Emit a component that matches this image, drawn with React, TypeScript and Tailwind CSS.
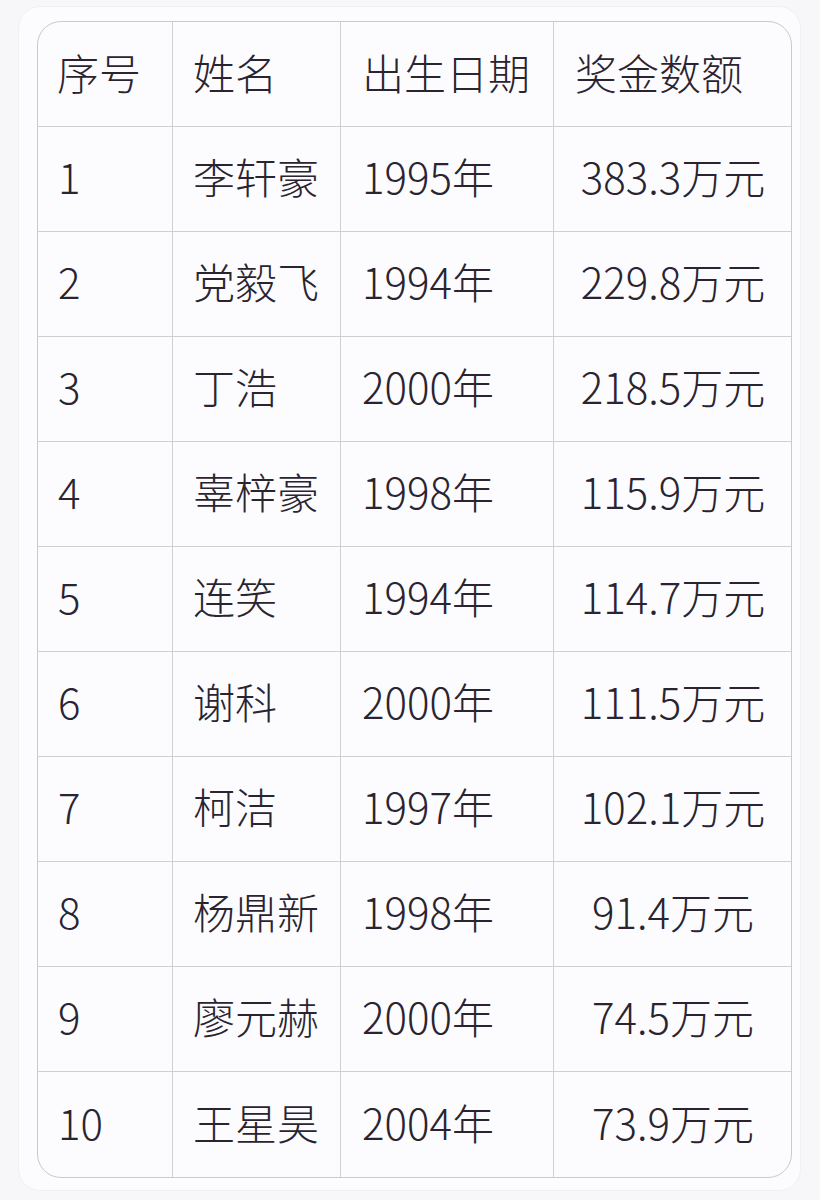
import React from "react";

const rows: [string, string, string, string][] = [
  ["1", "李轩豪", "1995年", "383.3万元"],
  ["2", "党毅飞", "1994年", "229.8万元"],
  ["3", "丁浩", "2000年", "218.5万元"],
  ["4", "辜梓豪", "1998年", "115.9万元"],
  ["5", "连笑", "1994年", "114.7万元"],
  ["6", "谢科", "2000年", "111.5万元"],
  ["7", "柯洁", "1997年", "102.1万元"],
  ["8", "杨鼎新", "1998年", "91.4万元"],
  ["9", "廖元赫", "2000年", "74.5万元"],
  ["10", "王星昊", "2004年", "73.9万元"],
];

const cols = "grid grid-cols-[135px_168px_213px_238px]";

export default function App() {
  return (
    <div
      className="w-[820px] h-[1200px] bg-[#f7f7f9] pt-[6px] pl-[18px]"
      style={{ fontFamily: '"Noto Sans CJK SC", "Noto Sans", sans-serif' }}
    >
      <div className="w-[783px] h-[1185px] rounded-[22px] bg-[#fcfcfe] border border-[#f0f0f3] pt-[14px] pl-[18px]">
        <div className="w-[755px] rounded-[24px] border border-[#c9c9ce] overflow-hidden text-[42px] font-light text-[#2a2431] leading-none">
          <div className={`${cols} h-[105px] border-b border-[#cfcfd4]`}>
            <div className="flex items-center pl-[19px] pb-[4px] border-r border-[#cfcfd4]">序号</div>
            <div className="flex items-center pl-[20px] pb-[4px] border-r border-[#cfcfd4]">姓名</div>
            <div className="flex items-center pl-[21px] pb-[4px] border-r border-[#cfcfd4]">出生日期</div>
            <div className="flex items-center pl-[21px] pb-[4px]">奖金数额</div>
          </div>
          {rows.map((r, i) => (
            <div
              key={i}
              className={`${cols} h-[105px] ${i < rows.length - 1 ? "border-b border-[#cfcfd4]" : ""}`}
            >
              <div className="flex items-center pl-[20px] pb-[6px] border-r border-[#cfcfd4]">{r[0]}</div>
              <div className="flex items-center pl-[20px] pb-[6px] border-r border-[#cfcfd4]">{r[1]}</div>
              <div className="flex items-center pl-[21px] pb-[6px] border-r border-[#cfcfd4]">{r[2]}</div>
              <div className="flex items-center justify-center pb-[6px]">{r[3]}</div>
            </div>
          ))}
        </div>
      </div>
    </div>
  );
}
